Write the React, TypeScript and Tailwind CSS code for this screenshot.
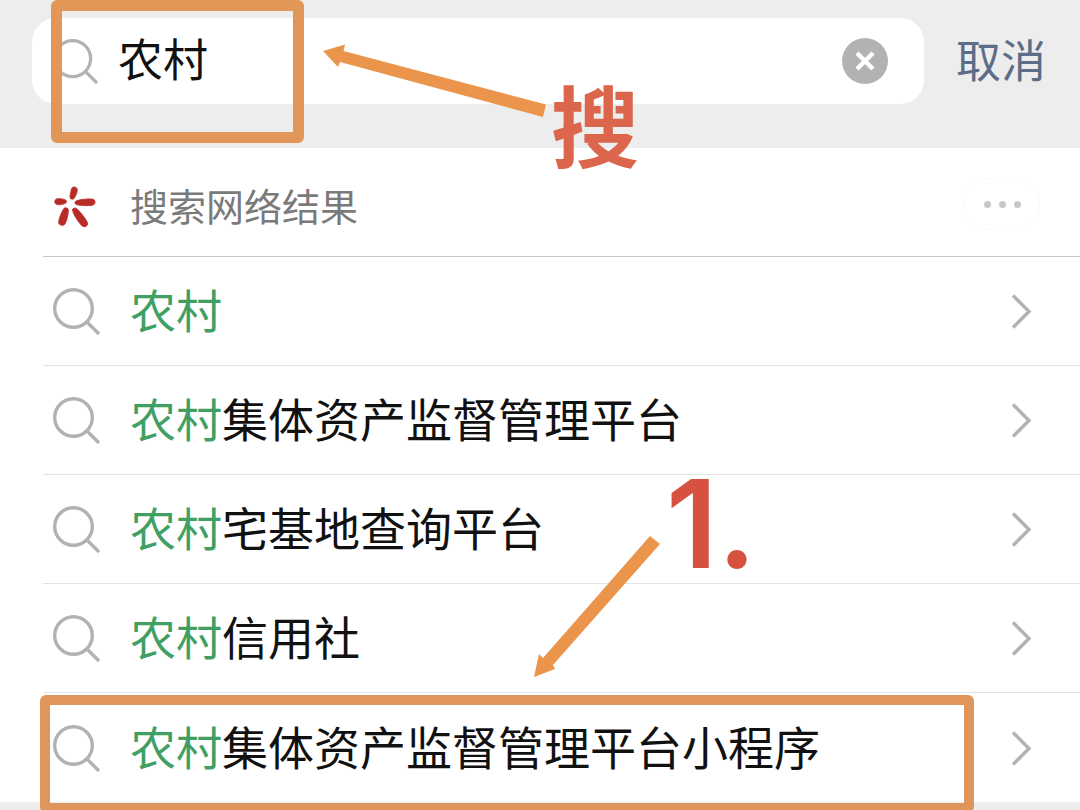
import { useState } from "react";

const KEYWORD = "农村";

const suggestions = [
  { rest: "" },
  { rest: "集体资产监督管理平台" },
  { rest: "宅基地查询平台" },
  { rest: "信用社" },
  { rest: "集体资产监督管理平台小程序", marked: true },
];

function SearchIcon({ className }: { className: string }) {
  return (
    <svg
      className={className}
      viewBox="0 0 48 48"
      fill="none"
      stroke="#b2b2b2"
      strokeWidth="3.4"
      aria-hidden="true"
    >
      <circle cx="21.5" cy="21.5" r="18.8" />
      <path d="M34.5 34.5 47 47" />
    </svg>
  );
}

function SparkIcon() {
  return (
    <svg
      className="w-12 h-12 shrink-0"
      viewBox="0 0 48 48"
      fill="#b92b27"
      stroke="#b92b27"
      strokeWidth="0.8"
      aria-hidden="true"
    >
      <path d="M19.500 5c.5-3 6-2.500 5.800 1-.2 3-1.800 6.500-3.300 8.500-1 1.200-4 .8-4-1.200 0-2.600.8-5.700 1.500-8.300Z" />
      <path d="M5 14.800c3-.5 6.500.2 8.600 1.200 1.400.7 1.200 2.600-.2 3.300-2.200 1.100-5.400 1.800-8.200 1.300-3.200-.7-3.200-5.200-.2-5.800Z" />
      <path d="M24 17c3.500-1.700 11.500-2.400 16-2 4 .4 4 5.600.4 6.200-4.400.8-12.400.6-16.100-.7-1.800-.7-1.800-2.700-.3-3.500Z" />
      <path d="M11.500 25c1-2 5-1.300 4.900 1.200-.2 4.300-1.200 9.500-3.200 13.500-1.700 3-7.200 1.500-6.600-2 .6-4 2.800-9.200 4.900-12.700Z" />
      <path d="M20.500 26c0-2.200 2.800-2.700 4.400-1.200 3.500 3.200 8 8.700 10.400 13.400 1.700 3.500-3 6.300-5.700 3.300-3.700-4-8.100-10.700-9.100-15.500Z" />
    </svg>
  );
}

function ChevronIcon() {
  return (
    <svg
      className="w-6 h-9 shrink-0"
      viewBox="0 0 24 36"
      fill="none"
      stroke="#b2b2b2"
      strokeWidth="3.4"
      aria-hidden="true"
    >
      <path d="M5 2.500 21 18.500 5 34.500" />
    </svg>
  );
}

function SearchHeader() {
  const [query, setQuery] = useState(KEYWORD);

  return (
    <header className="relative flex items-start h-[148px] pt-[18px] pl-8 pr-[34px] bg-[#ededed]">
      <div className="flex items-center flex-1 min-w-0 h-[86px] pl-5 pr-9 rounded-3xl bg-white">
        <SearchIcon className="w-[46px] h-[46px] shrink-0" />
        <input
          className="flex-1 min-w-0 h-16 pb-1.5 ml-5 bg-transparent text-[45px] text-[#111111] outline-none"
          type="text"
          aria-label="搜索"
          value={query}
          onChange={(e) => setQuery(e.target.value)}
        />
        <button type="button" aria-label="清除" onClick={() => setQuery("")}>
          <svg className="w-[46px] h-[46px]" viewBox="0 0 46 46">
            <circle cx="23" cy="23" r="23" fill="#b2b2b2" />
            <path d="m15 15 16 16M31 15 15 31" stroke="#fff" strokeWidth="4.500" />
          </svg>
        </button>
      </div>
      <button
        type="button"
        className="h-[86px] pb-1 ml-8 shrink-0 text-[45px] text-[#5d6c88]"
      >
        取消
      </button>

      <div className="absolute left-[51px] top-0 w-[253px] h-[143px] rounded-md border-[11px] border-[#e29658]" />
      <svg
        className="absolute left-[320px] top-10 w-[230px] h-20"
        viewBox="0 0 230 80"
        fill="#ea954b"
        aria-hidden="true"
      >
        <path d="M3 11 25 4.500 23.500 11 226 64.500 223 77 20 22 18 27Z" />
      </svg>
      <span className="absolute left-[551px] top-[78px] text-[88px] leading-[88px] font-bold text-[#db664b]">
        搜
      </span>
    </header>
  );
}

function Suggestion({ rest, marked }: { rest: string; marked?: boolean }) {
  return (
    <li className="relative pl-[43px] bg-white">
      <a
        href="#"
        className={
          marked
            ? "flex items-center h-[109px] pl-[9px] pr-12"
            : "flex items-center h-[109px] pl-[9px] pr-12 border-b border-[#e2e2e2]"
        }
      >
        <SearchIcon className="w-12 h-12 shrink-0" />
        <span className="flex-1 pb-1.5 ml-[30px] text-[46px] leading-[64px] whitespace-nowrap text-[#111111]">
          <span className="text-[#40a064]">{KEYWORD}</span>
          {rest}
        </span>
        <ChevronIcon />
      </a>
      {marked && (
        <div className="absolute left-10 right-[106px] top-0.5 h-[118px] rounded-md border-[10px] border-[#e0965a]" />
      )}
    </li>
  );
}

export default function App() {
  return (
    <div className="relative min-h-screen overflow-hidden bg-[#ededed] font-['Noto_Sans_CJK_SC',sans-serif]">
      <SearchHeader />
      <main>
        <section className="pl-[43px] bg-white">
          <div className="flex items-center h-[109px] pt-3 pl-[9px] pr-10 border-b border-[#c8c8c8]">
            <SparkIcon />
            <h2 className="flex-1 pb-1.5 ml-[30px] text-[38px] leading-[56px] text-[#7a7a7a]">
              搜索网络结果
            </h2>
            <button
              type="button"
              aria-label="更多"
              className="flex items-center justify-center gap-2 w-[76px] h-[52px] mb-2 rounded-3xl border border-[#fafafa]"
            >
              <span className="w-[7px] h-[7px] rounded-full bg-[#c8c8c8]" />
              <span className="w-[7px] h-[7px] rounded-full bg-[#c8c8c8]" />
              <span className="w-[7px] h-[7px] rounded-full bg-[#c8c8c8]" />
            </button>
          </div>
        </section>
        <ul>
          {suggestions.map((item) => (
            <Suggestion key={item.rest} {...item} />
          ))}
        </ul>
      </main>

      <svg
        className="absolute left-[530px] top-[532px] w-[134px] h-[148px]"
        viewBox="0 0 134 148"
        fill="#ea954b"
        aria-hidden="true"
      >
        <path d="M4 145 9 122 13 126 120 4 130 12 23 133 25 137Z" />
      </svg>
      <span className="absolute left-[666px] top-[462px] text-[122px] leading-[124px] font-semibold text-[#d65140] font-[Inter,sans-serif]">
        1.
      </span>
    </div>
  );
}
